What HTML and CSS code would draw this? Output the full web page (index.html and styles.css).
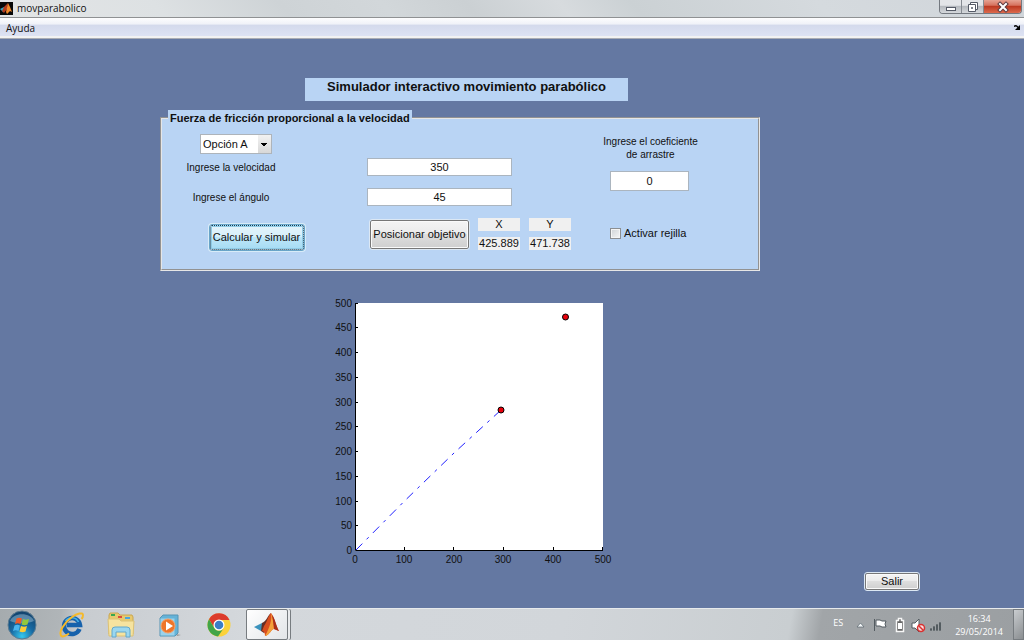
FILE: index.html
```html
<!DOCTYPE html>
<html lang="es">
<head>
<meta charset="utf-8">
<title>movparabolico</title>
<link rel="stylesheet" href="styles.css">
</head>
<body>
<header class="titlebar">
  <svg class="app-icon" viewBox="0 0 13 13" aria-hidden="true">
    <rect width="13" height="13" fill="#080808"/>
    <path d="M0 7l4-2 2 2-3 3z" fill="#35a6c4"/>
    <path d="M4 5l4-4-1 6-3 4-2-2z" fill="#b43a1c"/>
    <path d="M8 1l2 4 2 5-2-1-3 3-1-2z" fill="#f0892b"/>
  </svg>
  <h1 class="window-title">movparabolico</h1>
  <div class="window-buttons">
    <button class="win-btn" type="button" aria-label="Minimizar">
      <svg width="12" height="12" viewBox="0 0 12 12"><rect x="1.500" y="6.500" width="9" height="3" fill="#fff" stroke="#555a66"/></svg>
    </button>
    <button class="win-btn" type="button" aria-label="Restaurar">
      <svg width="12" height="12" viewBox="0 0 12 12" stroke="#555a66"><path d="M3.500 1.500h7v7h-7z" fill="#fff"/><path d="M1.500 3.500h7v7h-7z" fill="#fff"/><path d="M4.500 6.500h1v1h-1z" fill="none"/></svg>
    </button>
    <button class="win-btn win-close" type="button" aria-label="Cerrar">
      <svg width="12" height="12" viewBox="0 0 12 12"><path d="M3 3l6 6M9 3l-6 6" stroke="#5b3a40" stroke-width="4" stroke-linecap="square"/><path d="M3 3l6 6M9 3l-6 6" stroke="#fff" stroke-width="2" stroke-linecap="square"/></svg>
    </button>
  </div>
</header>
<nav class="menubar">
  <button class="menu-item" type="button">Ayuda</button>
  <svg class="dock-arrow" width="7" height="6" viewBox="0 0 7 6" aria-hidden="true"><path d="M0 1.500C2 0 3 1 4 2.500" fill="none" stroke="#000" stroke-width="1.500"/><path d="M6 0v5H1z"/></svg>
</nav>

<main class="workspace">
  <div class="column">
    <h2 class="heading">Simulador interactivo movimiento parabólico</h2>
    <fieldset class="panel">
      <legend class="panel-title">Fuerza de fricción proporcional a la velocidad</legend>
      <div class="panel-body">
        <div class="col-labels">
          <select class="option" aria-label="Opción"><option>Opción A</option></select>
          <label class="field-label" for="velocidad">Ingrese la velocidad</label>
          <label class="field-label" for="angulo">Ingrese el ángulo</label>
          <button class="btn btn-focus" type="button">Calcular y simular</button>
        </div>
        <div class="col-inputs">
          <input class="field" id="velocidad" type="text" value="350">
          <input class="field" id="angulo" type="text" value="45">
          <div class="target">
            <button class="btn btn-target" type="button">Posicionar objetivo</button>
            <dl class="coord"><dt>X</dt><dd>425.889</dd></dl>
            <dl class="coord"><dt>Y</dt><dd>471.738</dd></dl>
          </div>
        </div>
        <div class="col-drag">
          <label class="drag-label" for="arrastre">Ingrese el coeficiente<br>de arrastre</label>
          <input class="field field-drag" id="arrastre" type="text" value="0">
          <label class="check"><input class="check-box" type="checkbox">Activar rejilla</label>
        </div>
      </div>
    </fieldset>
    <svg class="plot" width="300" height="280" viewBox="0 0 300 280" role="img" aria-label="Trayectoria">
      <rect x="35" y="10" width="248" height="248" fill="#fff"/>
      <path class="axis" d="M35.500 10V257.500H283M35 10.500h3M35 34.500h3M35 59.500h3M35 84.500h3M35 109.500h3M35 133.500h3M35 158.500h3M35 183.500h3M35 208.500h3M35 232.500h3M84.500 258v-4M133.500 258v-4M183.500 258v-4M233.500 258v-4M282.500 258v-4"/>
      <path class="trajectory" d="M36 257L84 208.500L134 160L181 117"/>
      <circle class="marker" cx="181" cy="117" r="3"/>
      <circle class="marker" cx="245.500" cy="24" r="3"/>
      <g class="ticks ticks-y">
        <text x="32" y="14">500</text><text x="32" y="38">450</text><text x="32" y="63">400</text><text x="32" y="88">350</text><text x="32" y="113">300</text><text x="32" y="137">250</text><text x="32" y="162">200</text><text x="32" y="187">150</text><text x="32" y="212">100</text><text x="32" y="236">50</text><text x="32" y="261">0</text>
      </g>
      <g class="ticks ticks-x">
        <text x="35" y="270">0</text><text x="84" y="270">100</text><text x="134" y="270">200</text><text x="183" y="270">300</text><text x="233" y="270">400</text><text x="283" y="270">500</text>
      </g>
    </svg>
  </div>
  <button class="btn btn-exit" type="button">Salir</button>
</main>

<footer class="taskbar">
  <button class="task" type="button" aria-label="Inicio">
    <svg width="30" height="30" viewBox="0 0 30 30">
      <defs><radialGradient id="orb" cx=".5" cy=".9" r=".9"><stop offset="0" stop-color="#35c8ee"/><stop offset=".45" stop-color="#176aa3"/><stop offset="1" stop-color="#123f68"/></radialGradient></defs>
      <circle cx="15" cy="15" r="14" fill="url(#orb)" stroke="#5c7c92"/>
      <path d="M3 11C6 2 24 2 27 11C20 14 10 14 3 11z" fill="#bcd8e6" opacity=".4"/>
      <path d="M9.500 8.500c2-1 3.500-1 5.500 0l-1.500 5.500c-2-1-3.500-1-5.500 0z" fill="#ef5a28"/>
      <path d="M16 9c2 1 3.500 1 6 0l-1.500 5.500c-2 1-4 1-6 0z" fill="#93c83d"/>
      <path d="M7.500 15.500c2-1 3.500-1 5.500 0L11.500 21c-2-1-3.500-1-5.500 0z" fill="#4bb5ee"/>
      <path d="M14 16c2 1 4 1 6 0l-1.500 5.500c-2 1-4 1-6 0z" fill="#fdcb36"/>
    </svg>
  </button>
  <button class="task" type="button" aria-label="Internet Explorer">
    <svg width="28" height="28" viewBox="0 0 28 28">
      <path d="M21.500 18A8 8 0 1 1 22 14H9" fill="none" stroke="#1762ac" stroke-width="4.500"/>
      <path d="M20.500 11A7.500 7.500 0 0 0 7.500 10" fill="none" stroke="#43b3e9" stroke-width="1.500"/>
      <path d="M4 25.500C-1 22 7 11 14 6C19 2.500 25 1 25 4C25 5 24.500 7 23.500 8" fill="none" stroke="#f5b92b" stroke-width="2"/>
      <path d="M4 25.500C6 26 8 24.500 11 22.500" fill="none" stroke="#f5b92b" stroke-width="2"/>
    </svg>
  </button>
  <button class="task" type="button" aria-label="Explorador">
    <svg width="28" height="28" viewBox="0 0 28 28">
      <path d="M2 4l1-2h8l2 2h12l1 2v17H2z" fill="#e7c96e" stroke="#caa64f"/>
      <path d="M4 3h4v2H4z" fill="#35a853"/><path d="M11 5h4v2h-4z" fill="#dc4d3c"/><path d="M18 6h5v2h-5z" fill="#4ba5dd"/>
      <path d="M1 8h11l2 2h13l-1 15H2z" fill="#f6e39f" stroke="#dcc277"/>
      <path d="M5 26v-7q0-3 3-3h12q3 0 3 3v7h-4v-5H9v5z" fill="#9bd7ef" stroke="#62a8cc"/>
    </svg>
  </button>
  <button class="task" type="button" aria-label="Reproductor multimedia">
    <svg width="28" height="28" viewBox="0 0 28 28">
      <path d="M20 23l5 1-4 1z" fill="#999"/>
      <path d="M4 7l3-3h15v18l-3 3H4z" fill="#65b3d8" stroke="#5795b5"/><path d="M4.500 7.500h14v17h-14z" fill="#9bd2eb"/>
      <circle cx="12" cy="15" r="7" fill="#ee762b" stroke="#f6a168"/><path d="M10 10.500l7 4.500-7 4.500z" fill="#fff"/>
    </svg>
  </button>
  <button class="task" type="button" aria-label="Chrome">
    <svg width="26" height="26" viewBox="0 0 26 26">
      <circle cx="13" cy="13" r="11.500" fill="#fbd23a"/>
      <path d="M3 7.300A11.500 11.500 0 0 1 23.500 8H13a5.500 5.500 0 0 0-5 7.500z" fill="#dc3b2d"/>
      <path d="M3 7.300A11.500 11.500 0 0 0 12 24.500L17.500 16.500A5.500 5.500 0 0 1 8 15.500z" fill="#41a548"/>
      <circle cx="13" cy="13" r="5.500" fill="#fff"/><circle cx="13" cy="13" r="4.300" fill="#3b7ec6"/>
    </svg>
  </button>
  <button class="task task-active" type="button" aria-label="MATLAB">
    <svg width="26" height="26" viewBox="0 0 26 26">
      <path d="M0 15l8-4 4 3-5 5z" fill="#3b93bd"/><path d="M8 11c4-1 6-8 9-10l-2 14-5 6-3-2z" fill="#672e25"/>
      <path d="M17 1c-3 3-4 9-7 13l-2 5c2 0 3 2 3 5 5-1 6-7 9-7l5 2C22 14 20 4 17 1z" fill="#d94e1f"/>
      <path d="M17 1c1 7-1 14-6 23 5-1 6-7 9-7C19 11 19 5 17 1z" fill="#f3a13a"/>
      <path d="M18 3c1 5 2 10 2 14l5 2C22 14 21 6 18 3z" fill="#a9301b"/>
    </svg>
  </button>
  <div class="tray">
    <span class="lang">ES</span>
    <svg class="tray-icons" width="90" height="20" viewBox="0 0 90 20" aria-hidden="true">
      <path d="M5 12l3.500-4 3.500 4z" fill="#f3f6f8" stroke="#59656d" stroke-width=".7"/>
      <path d="M22.500 4v12M24 5h4l2 1h4l-1 3 1 3h-4l-2-1h-4z" fill="#fff" stroke="#535b60"/>
      <path d="M44.500 5.500h2v-2h3v2h2v11h-7z" fill="#666" stroke="#f7f7f7" stroke-width="1.500"/><path d="M46 8h4v6h-4z" fill="#fff"/>
      <path d="M60 8h3l4-4v13l-4-4h-3z" fill="#fff" stroke="#535b60"/>
      <circle cx="69" cy="13" r="3.500" fill="#f8dede" stroke="#d93232" stroke-width="1.500"/><path d="M66.500 10.500l5 5" stroke="#d93232" stroke-width="1.500"/>
      <path d="M78.500 13.500h1v2h-1zM81.500 11.500h1v4h-1zM84.500 9.500h1v6h-1zM87.500 7.500h1v8h-1z" stroke="#545c60" fill="#fff"/>
    </svg>
    <time class="clock" datetime="2014-05-29T16:34">16:34<br>29/05/2014</time>
    <button class="show-desktop" type="button" aria-label="Mostrar escritorio"></button>
  </div>
</footer>
</body>
</html>
```

FILE: styles.css
```css
* { box-sizing: border-box; }

body {
  margin: 0;
  min-height: 100vh;
  display: flex;
  flex-direction: column;
  background: #6478a2;
  color: #101010;
  font: 11px/13px "Liberation Sans", Arial, sans-serif;
}

button, input, select { font: inherit; color: inherit; }
button { padding: 0; }

.titlebar {
  display: flex;
  align-items: flex-start;
  height: 18px;
  padding-top: 2px;
  background: linear-gradient(50deg, #e3e5e6 0%, #dde1e3 16%, #ced3d6 28%, #d2d7da 38%, #cbd0d3 46%, #d7dbde 55%, #cbd1d4 62%, #d5dade 80%, #d0d5da 100%);
  border-bottom: 1px solid #8f9193;
}
.app-icon { width: 13px; height: 13px; }
.window-title {
  margin: 0 0 0 4px;
  font: 10px/13px "Open Sans", "Noto Sans", sans-serif;
}
.window-buttons {
  display: flex;
  margin: -2px 2px 0 auto;
  border: 1px solid #747980;
  border-top: 0;
  border-radius: 0 0 4px 4px;
  overflow: hidden;
}
.win-btn {
  display: flex;
  align-items: center;
  justify-content: center;
  width: 22px;
  height: 13px;
  border: 0;
  border-right: 1px solid #858a91;
  background: linear-gradient(#e3e5e8 0 40%, #b6babf 50%, #d5d8dc);
}
.win-close {
  width: 37px;
  border-right: 0;
  background: linear-gradient(#e6a292, #d7735f 40%, #bd3a22 50%, #dd6a4d);
}

.menubar {
  display: flex;
  align-items: center;
  justify-content: space-between;
  height: 21px;
  padding: 0 3px 0 6px;
  background: linear-gradient(#fdfdfe, #f0f2f8 30%, #d4daec 36%, #dde2f3 88%, #f2f2f2 90%);
  border-bottom: 1px solid #a9acb4;
}
.menu-item {
  border: 0;
  background: none;
  font: 10px/14px "Open Sans", "Noto Sans", sans-serif;
}

.workspace {
  flex: 1;
  display: flex;
  align-items: flex-end;
  justify-content: space-between;
  padding: 39px 105px 18px 160px;
}
.column {
  align-self: flex-start;
  display: flex;
  flex-direction: column;
  align-items: center;
  width: 600px;
}
.heading {
  width: 323px;
  margin: 0 0 9px 13px;
  padding: 1px 0 6px;
  background: #b9d4f4;
  text-align: center;
  font-size: 13px;
  line-height: 16px;
}
.panel {
  width: 100%;
  margin: 0;
  padding: 0;
  border: 2px groove #e6e6e6;
  background: #b9d4f4;
}
.panel-title {
  margin-left: 6px;
  padding: 0 2px;
  background: #b9d4f4;
  font-weight: bold;
  line-height: 16px;
}
.panel-body { display: flex; height: 143px; }

.col-labels {
  display: flex;
  flex-direction: column;
  align-items: center;
  width: 205px;
  padding: 8px 67px 0 0;
}
.option {
  width: 72px;
  height: 20px;
  margin: 0 0 7px 10px;
  padding: 0 2px;
  appearance: none;
  border: 1px solid #aeb4ba;
  border-radius: 0;
  background:
    linear-gradient(to top right, transparent 50%, #000 50%) 60px 8px / 3px 4px no-repeat,
    linear-gradient(to top left, transparent 50%, #000 50%) 63px 8px / 3px 4px no-repeat,
    linear-gradient(#f2f2f2, #d8d8d8) right / 13px 100% no-repeat,
    #fff;
}
.field-label, .drag-label { font-size: 10px; white-space: nowrap; }
.field-label { margin-bottom: 17px; }

.btn {
  border: 1px solid #777;
  border-radius: 2px;
  outline: 1px solid #dce8f4;
  background: linear-gradient(#f4f4f4, #ebebeb 48%, #dedede 50%, #cfcfcf);
  box-shadow: inset 0 0 0 1px #fafafa;
  white-space: nowrap;
}
.btn-focus {
  width: 94px;
  height: 25px;
  margin: 4px 0 0 51px;
  flex: none;
  border: 1px dotted #1c3c50;
  outline: 1px solid #69a5c8;
  background: linear-gradient(#e4f4fb, #d5effa 48%, #bde6f8 50%, #a6dcf4);
  box-shadow: inset 0 0 0 1px #8fcbe6, 0 0 0 2px #d8ecf8;
}

.col-inputs {
  display: flex;
  flex-direction: column;
  gap: 12px;
  width: 205px;
  padding-top: 32px;
}
.field {
  width: 145px;
  height: 18px;
  padding: 0;
  border: 1px solid #abb5bf;
  background: #fff;
  text-align: center;
}
.target { display: flex; gap: 9px; padding-left: 3px; }
.btn-target { width: 99px; height: 29px; margin-top: 2px; }
.coord {
  display: flex;
  flex-direction: column;
  gap: 6px;
  width: 42px;
  margin: 0;
  text-align: center;
}
.coord dt, .coord dd { margin: 0; line-height: 13px; background: #f0f0f0; }

.col-drag {
  display: flex;
  flex-direction: column;
  width: 154px;
  padding: 9px 0 0 38px;
}
.drag-label { margin: 0 16px 10px -19px; text-align: center; }
.field-drag { width: 79px; height: 20px; }
.check { display: flex; align-items: center; gap: 3px; margin-top: 36px; white-space: nowrap; }
.check-box {
  width: 11px;
  height: 11px;
  margin: 0;
  appearance: none;
  border: 1px solid #8c8f92;
  background: linear-gradient(135deg, #cfd3d6, #f6f6f6);
  box-shadow: inset 0 0 0 1px #f4f4f4;
}

.plot { margin: 22px 0 0 20px; }
.axis { fill: none; stroke: #000; }
.trajectory { fill: none; stroke: #2020ff; stroke-dasharray: 9 6 3 6; }
.marker { fill: #e8000b; stroke: #000; }
.ticks { font-size: 10px; fill: #101010; }
.ticks-y { text-anchor: end; }
.ticks-x { text-anchor: middle; }

.btn-exit { width: 54px; height: 17px; }

.taskbar {
  display: flex;
  height: 32px;
  border-top: 1px solid #e7eaec;
  background: linear-gradient(100deg, #a5abae, #b0b5b8 6%, #c8ccd0 8%, #d4d8dc 24%, #d2d6da 55%, #c9ced1 77%, #a1a5a8 80%, #9b9fa2);
}
.task {
  display: flex;
  align-items: center;
  justify-content: center;
  width: 49px;
  border: 0;
  background: none;
}
.task:first-child { width: 43px; margin-right: 4px; }
.task-active {
  width: 42px;
  margin-left: 3px;
  border: 1px solid #777c80;
  border-radius: 2px;
  background: linear-gradient(135deg, #fff, #e2e5e8);
  box-shadow: 2px 0 0 #e9ebed, 3px 0 0 #777c80;
}
.tray { display: flex; align-items: center; margin-left: auto; color: #fff; font: 9px/13px "Open Sans", "Noto Sans", sans-serif; }
.lang { margin: 0 9px 4px 0; }
.tray-icons { margin-right: 13px; }
.clock { margin-right: 10px; text-align: center; }
.show-desktop {
  align-self: stretch;
  width: 11px;
  border: 1px solid #777c80;
  background: linear-gradient(135deg, #c9cccf, #8a8e91);
}
```
